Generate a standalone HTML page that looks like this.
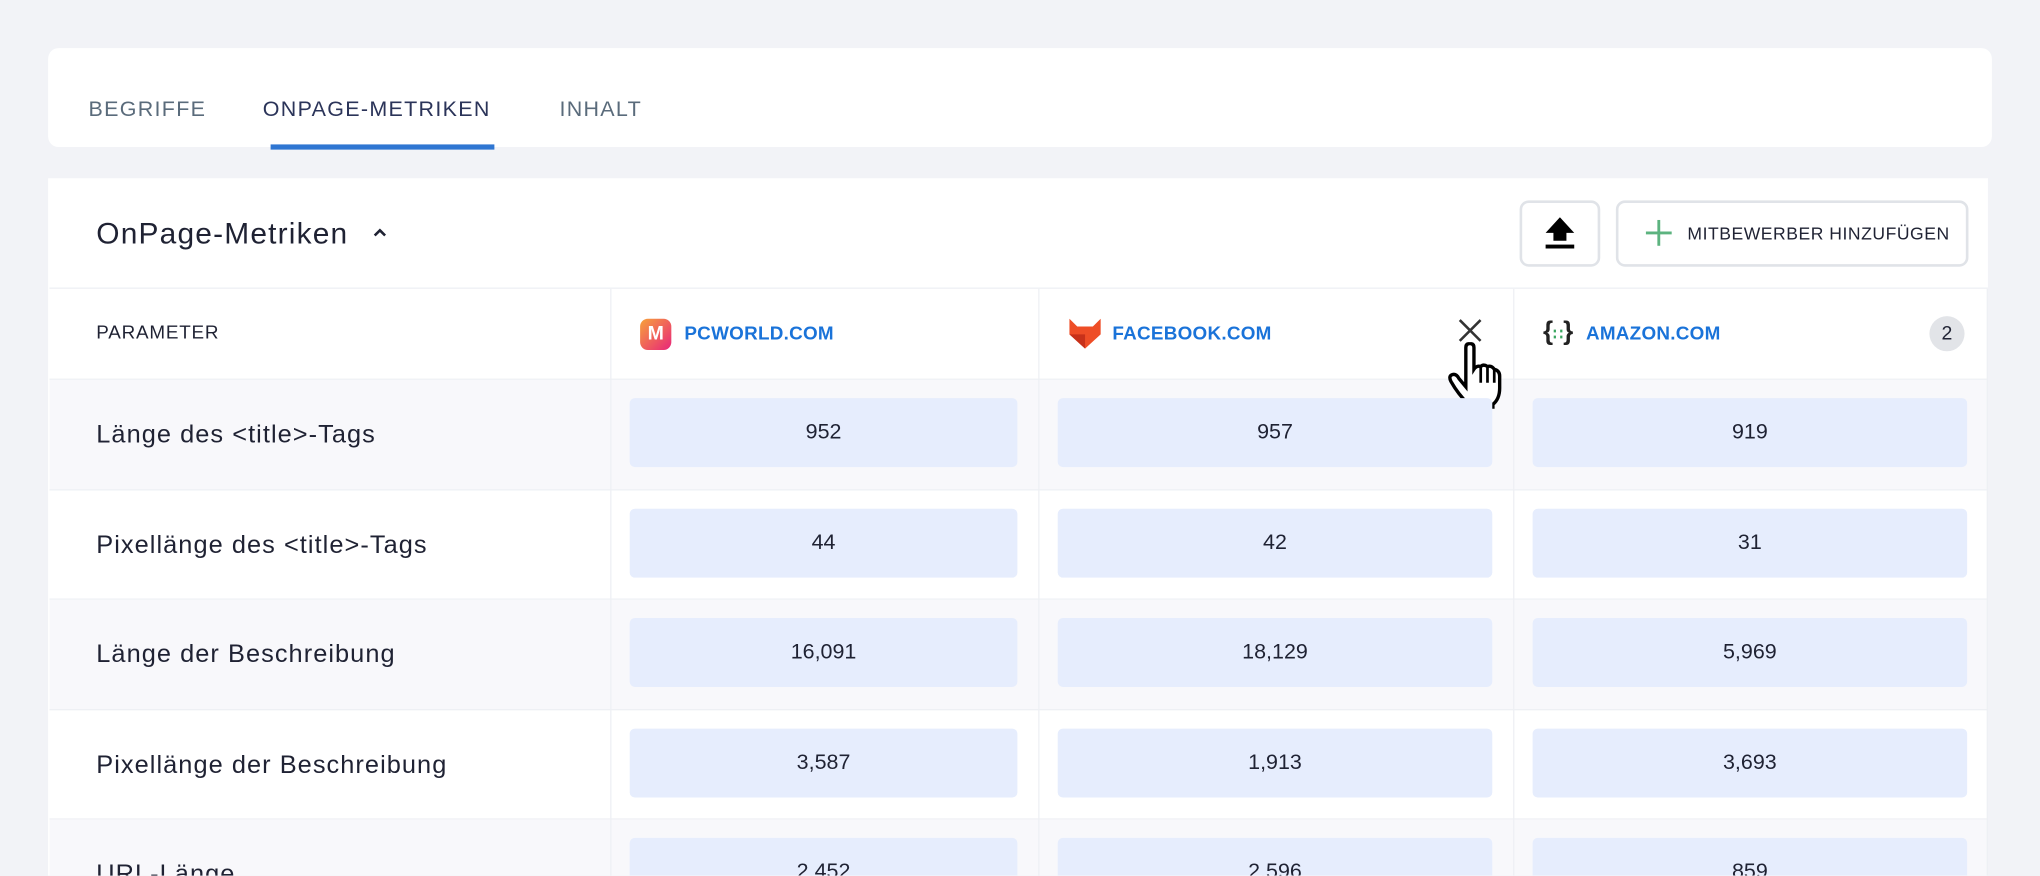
<!DOCTYPE html>
<html><head><meta charset="utf-8"><style>
html,body{margin:0;padding:0;background:#f2f3f7;width:2040px;height:876px;overflow:hidden}
#w{position:absolute;left:0;top:0;width:1568px;height:673px;overflow:hidden;transform:scale(1.30102);transform-origin:0 0;font-family:"Liberation Sans",sans-serif;color:#1f2233}
.a{position:absolute}
.tabs{left:37px;top:37px;width:1494px;height:76px;background:#fff;border-radius:8px}
.tab{top:75px;font-size:16.5px;color:#5a6b7b;letter-spacing:1px}
.card{left:37px;top:137px;width:1491px;height:600px;background:#fff}
.btn{border:2px solid #e0e3e8;border-radius:7px;background:#fff;box-sizing:border-box}
.hl{background:#eef0f4;height:1px}
.vl{background:#eef0f4;width:1px}
.row{left:38px;width:1490px}
.lbl{left:74px;font-size:19.5px;color:#1f2233;letter-spacing:.8px}
.v{background:#e6edfd;border-radius:4px;font-size:16.5px;text-align:center;color:#1f2233}
.dom{font-size:14.5px;color:#1a73d9;font-weight:bold;top:249px;letter-spacing:.2px}
</style></head><body><div id="w">
<div class="a tabs"></div>
<div class="a tab" style="left:68px">BEGRIFFE</div>
<div class="a tab" style="left:202px;color:#2b3459">ONPAGE-METRIKEN</div>
<div class="a tab" style="left:430px">INHALT</div>
<div class="a" style="left:208px;top:111px;width:172px;height:4px;background:#2f76d2"></div>

<div class="a card"></div>
<div class="a" style="left:74px;top:166px;font-size:23px;color:#1f2233;letter-spacing:.9px">OnPage-Metriken</div>
<svg class="a" style="left:286px;top:174px" width="12" height="10"><path d="M2 7L6 3L10 7" stroke="#1f2233" stroke-width="2" fill="none"/></svg>
<div class="a btn" style="left:1168px;top:154px;width:62px;height:51px"></div>
<div class="a btn" style="left:1242px;top:154px;width:271px;height:51px"></div>
<svg class="a" style="left:1187px;top:166px" width="24" height="26" viewBox="0 0 24 26"><path d="M12 1 L23 13 H17 V19 H7 V13 H1 Z" fill="#000"/><rect x="1" y="22" width="22" height="3" fill="#000"/></svg>
<svg class="a" style="left:1265px;top:169px" width="20" height="20"><path d="M10 0V20M0 10H20" stroke="#5cb37f" stroke-width="2.2"/></svg>
<div class="a" style="left:1297px;top:172px;font-size:13.5px;color:#1f2233;letter-spacing:.4px">MITBEWERBER HINZUFÜGEN</div>

<div class="a hl row" style="top:221px"></div>
<div class="a hl row" style="top:291px"></div>
<div class="a row" style="top:292px;height:84px;background:#f8f8fb"></div>
<div class="a hl row" style="top:376px"></div>
<div class="a hl row" style="top:460px"></div>
<div class="a row" style="top:461px;height:84px;background:#f8f8fb"></div>
<div class="a hl row" style="top:545px"></div>
<div class="a hl row" style="top:629px"></div>
<div class="a row" style="top:630px;height:50px;background:#f8f8fb"></div>
<div class="a vl" style="left:469px;top:222px;height:460px"></div>
<div class="a vl" style="left:798px;top:222px;height:460px"></div>
<div class="a vl" style="left:1163px;top:222px;height:460px"></div>
<div class="a vl" style="left:1527px;top:222px;height:460px"></div>

<div class="a" style="left:74px;top:248px;font-size:14.5px;letter-spacing:.6px">PARAMETER</div>
<div class="a" style="left:492px;top:245px;width:24px;height:24px;border-radius:6px;background:linear-gradient(135deg,#f7a23a,#e8267a);color:#fff;font-size:15px;font-weight:bold;text-align:center;line-height:24px">M</div>
<div class="a dom" style="left:526px">PCWORLD.COM</div>
<svg class="a" style="left:821px;top:243px" width="26" height="26" viewBox="0 0 26 26"><path d="M1 2 L7 8 H19 L25 2 V14 L13 25 L1 14Z" fill="#ee4d26"/><path d="M1 14 L13 14 L13 25Z" fill="#c7311a"/></svg>
<div class="a dom" style="left:855px">FACEBOOK.COM</div>
<svg class="a" style="left:1121px;top:245px" width="18" height="18"><path d="M1 1L17 17M17 1L1 17" stroke="#333" stroke-width="2"/></svg>
<svg class="a" style="left:1110px;top:263px" width="50" height="52" viewBox="0 0 48 50"><path d="M16 4 Q16 1 19 1 Q22 1 22 4 V20 Q24 17 27 18 Q29 16 32 18 Q35 17 37 20 Q41 21 41 25 V34 Q41 42 36 46 V48 H18 V46 Q10 38 5 29 Q3 25 6 24 Q9 23 11 27 L16 33Z" fill="#fff" stroke="#000" stroke-width="2.5"/><path d="M27 18V30M32 18V30M37 20V30" stroke="#000" stroke-width="2"/></svg>
<div class="a" style="left:1186px;top:244px;font-size:20px;font-weight:bold;color:#222">{<span style="color:#3aa660;font-size:12px">&#8759;</span>}</div>
<div class="a dom" style="left:1219px">AMAZON.COM</div>
<div class="a" style="left:1483px;top:243px;width:27px;height:27px;border-radius:50%;background:#e2e4e8;font-size:15px;text-align:center;line-height:27px">2</div>

<div class="a lbl" style="top:323px">Länge des &lt;title&gt;-Tags</div>
<div class="a lbl" style="top:408px">Pixellänge des &lt;title&gt;-Tags</div>
<div class="a lbl" style="top:492px">Länge der Beschreibung</div>
<div class="a lbl" style="top:577px">Pixellänge der Beschreibung</div>
<div class="a lbl" style="top:661px">URL-Länge</div>

<div class="a v" style="left:484px;top:306px;width:298px;height:53px;line-height:53px">952</div>
<div class="a v" style="left:813px;top:306px;width:334px;height:53px;line-height:53px">957</div>
<div class="a v" style="left:1178px;top:306px;width:334px;height:53px;line-height:53px">919</div>
<div class="a v" style="left:484px;top:391px;width:298px;height:53px;line-height:53px">44</div>
<div class="a v" style="left:813px;top:391px;width:334px;height:53px;line-height:53px">42</div>
<div class="a v" style="left:1178px;top:391px;width:334px;height:53px;line-height:53px">31</div>
<div class="a v" style="left:484px;top:475px;width:298px;height:53px;line-height:53px">16,091</div>
<div class="a v" style="left:813px;top:475px;width:334px;height:53px;line-height:53px">18,129</div>
<div class="a v" style="left:1178px;top:475px;width:334px;height:53px;line-height:53px">5,969</div>
<div class="a v" style="left:484px;top:560px;width:298px;height:53px;line-height:53px">3,587</div>
<div class="a v" style="left:813px;top:560px;width:334px;height:53px;line-height:53px">1,913</div>
<div class="a v" style="left:1178px;top:560px;width:334px;height:53px;line-height:53px">3,693</div>
<div class="a v" style="left:484px;top:644px;width:298px;height:29px;line-height:53px;border-radius:4px 4px 0 0;overflow:hidden">2,452</div>
<div class="a v" style="left:813px;top:644px;width:334px;height:29px;line-height:53px;border-radius:4px 4px 0 0;overflow:hidden">2,596</div>
<div class="a v" style="left:1178px;top:644px;width:334px;height:29px;line-height:53px;border-radius:4px 4px 0 0;overflow:hidden">859</div>
</div></body></html>
